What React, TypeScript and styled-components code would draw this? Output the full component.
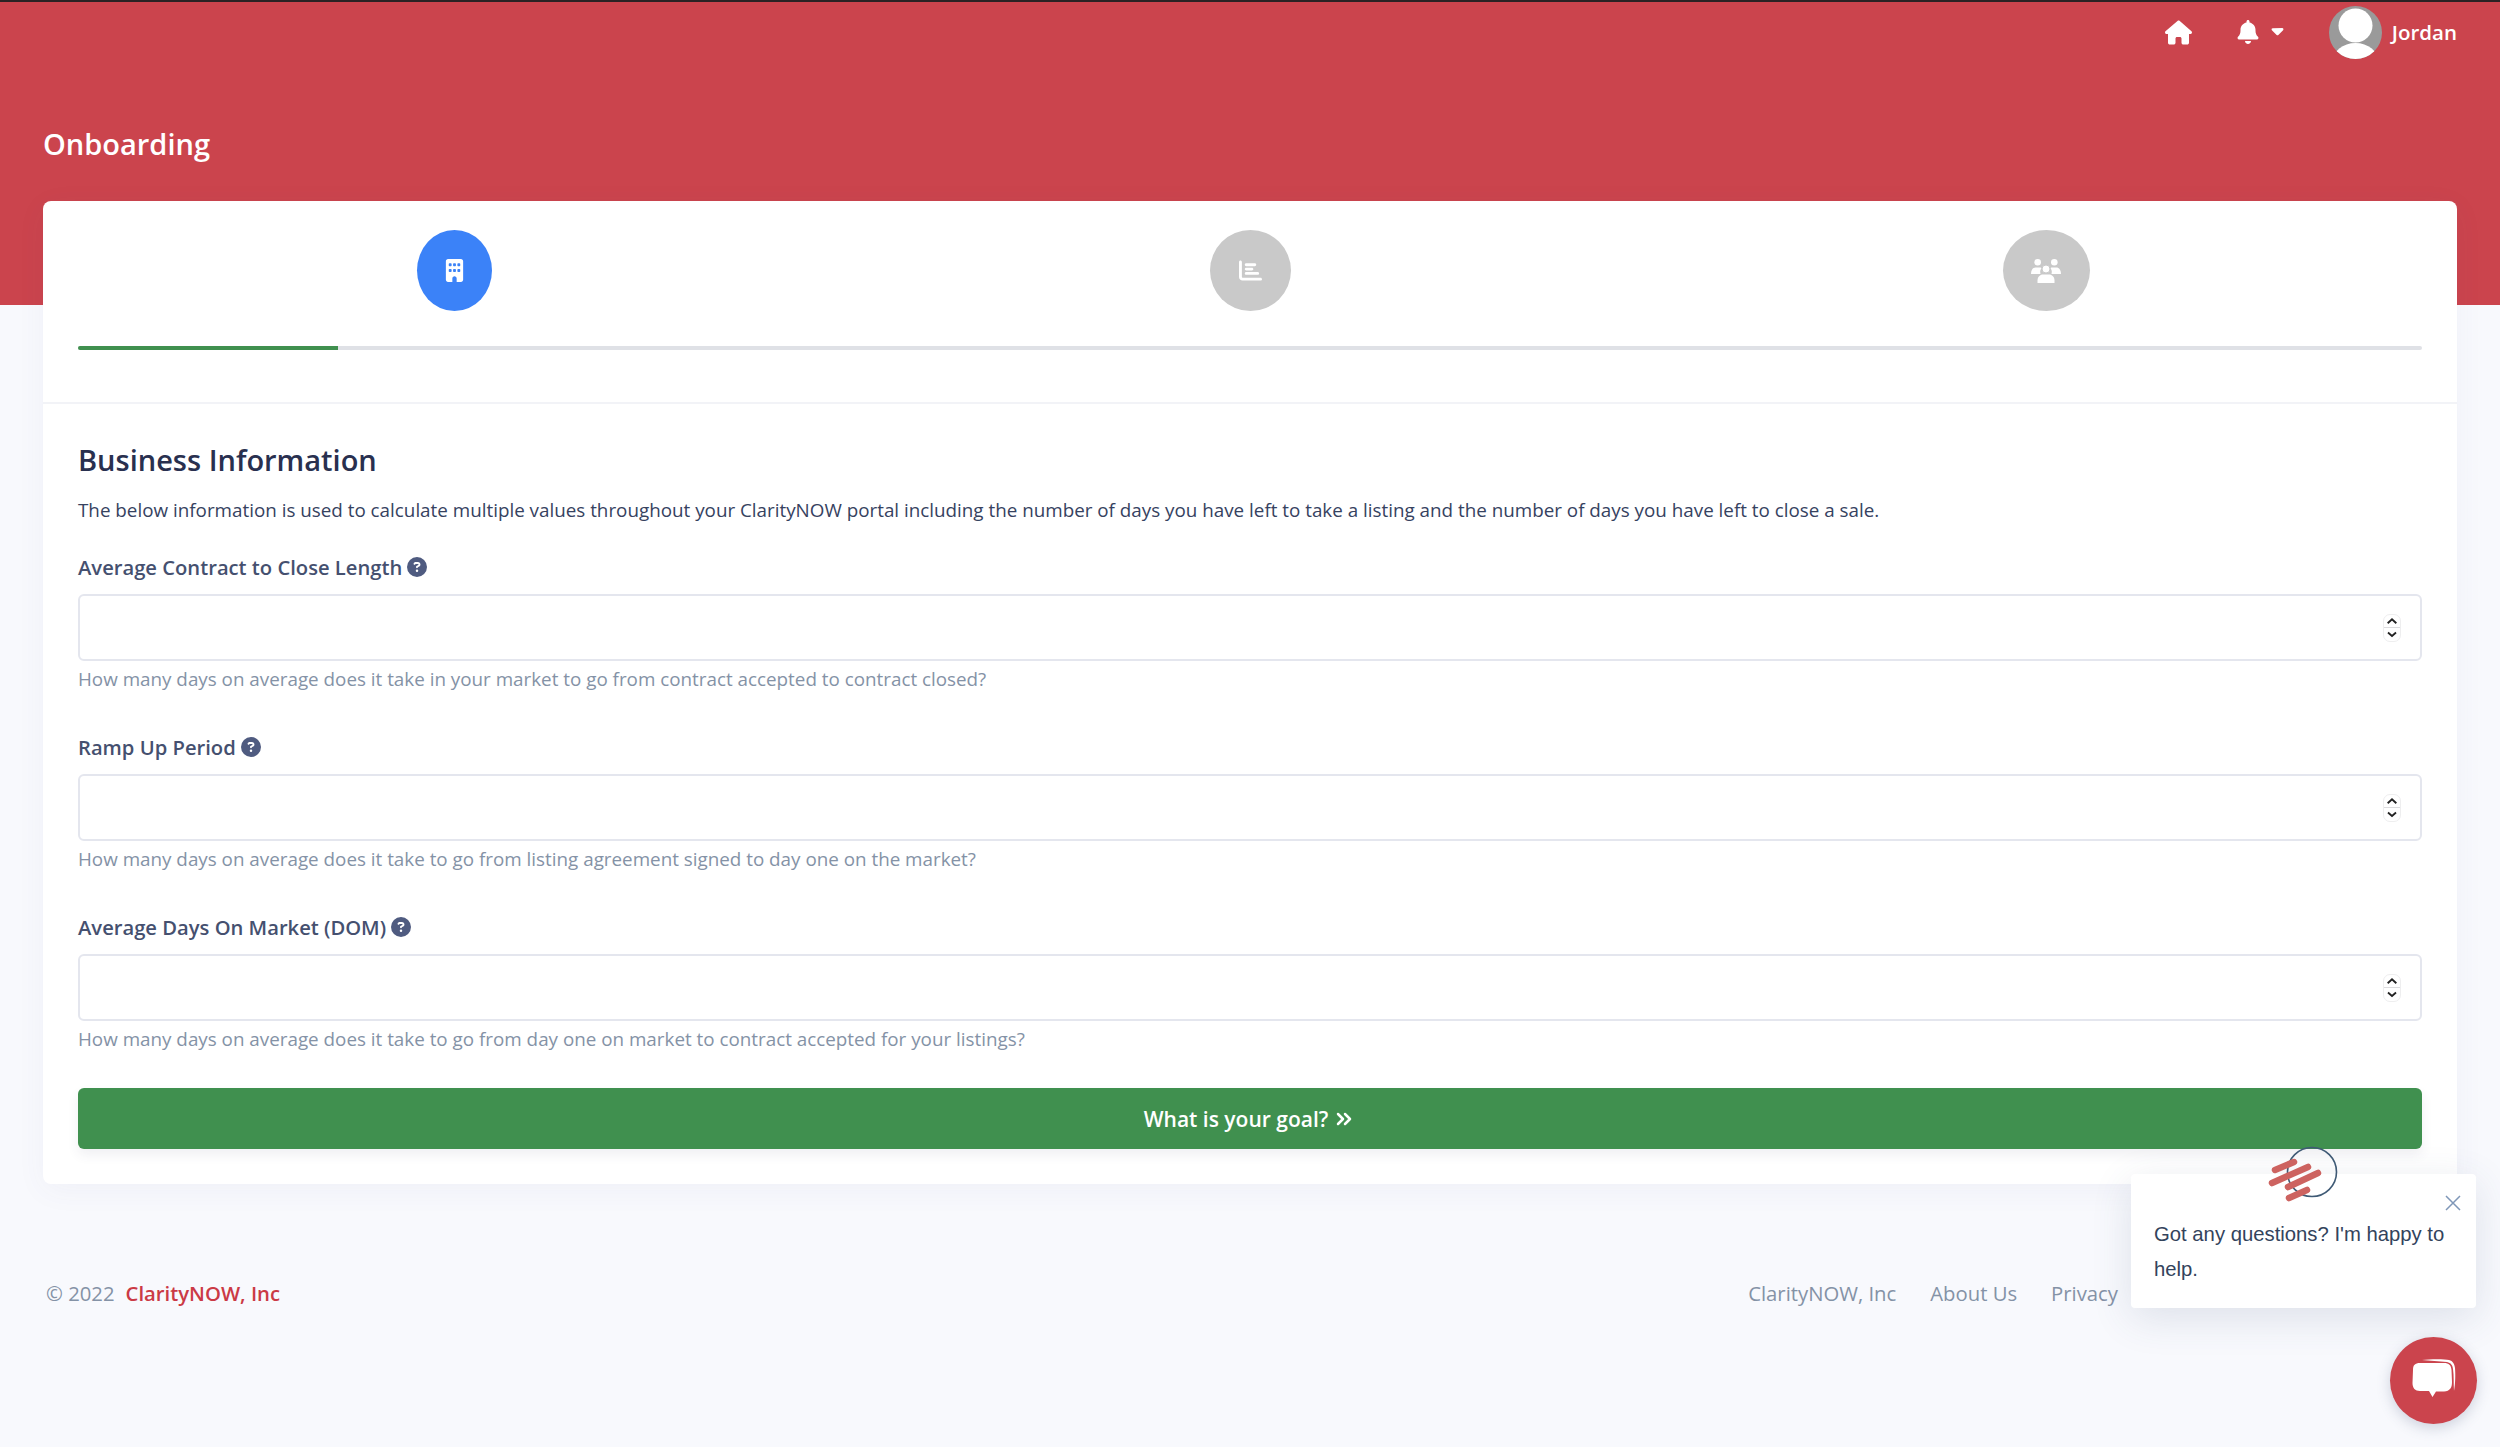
import React from "react";
import styled, { createGlobalStyle } from "styled-components";
import { FaHouse, FaBell, FaCaretDown, FaBuilding, FaChartBar, FaCircleQuestion } from "react-icons/fa6";
import { ChevronsRight } from "lucide-react";

const Global = createGlobalStyle`
  html, body { margin: 0; padding: 0; background: #f8f9fd; }
  body { font-family: "Open Sans", "Liberation Sans", sans-serif; color: #2b3a5a; }
  * { box-sizing: border-box; }
`;

const Page = styled.div`
  width: 2500px;
  height: 1447px;
  overflow: hidden;
  position: relative;
`;

const Header = styled.header`
  height: 305px;
  background: #cb444d;
  border-top: 2px solid #2a2224;
  padding: 0 43px;
`;

const TopBar = styled.div`
  display: flex;
  justify-content: flex-end;
  align-items: center;
  height: 60px;
  color: #fff;
`;

const NavIcon = styled.span<{ $size: number; $mr: number; $raise?: number }>`
  display: inline-flex;
  font-size: ${(p) => p.$size}px;
  margin-right: ${(p) => p.$mr}px;
  margin-bottom: ${(p) => p.$raise ?? 0}px;
`;

const Avatar = styled.svg`
  width: 53px;
  height: 53px;
  margin-right: 10px;
`;

const UserName = styled.span`
  font-size: 20.5px;
  font-weight: 600;
`;

const Title = styled.h1`
  margin: 62px 0 0;
  font-size: 29px;
  line-height: 40px;
  font-weight: 600;
  color: #fff;
`;

const Card = styled.main`
  margin: -104px 43px 0;
  height: 983px;
  background: #fff;
  border-radius: 8px;
  box-shadow: 0 6px 30px rgba(70, 80, 130, 0.05);
`;

const Wizard = styled.div`
  height: 203px;
  padding: 29px 35px 0;
  border-bottom: 2px solid #f2f3f7;
`;

const Steps = styled.div`
  display: grid;
  grid-template-columns: repeat(3, 1fr);
  height: 81px;
  margin: 0 -22px;
`;

const Step = styled.div`
  display: flex;
  justify-content: center;
`;

const StepCircle = styled.div<{ $w: number; $active?: boolean }>`
  width: ${(p) => p.$w}px;
  height: 81px;
  border-radius: 50%;
  background: ${(p) => (p.$active ? "#3b82f8" : "#c9c9c9")};
  display: flex;
  align-items: center;
  justify-content: center;
  color: #fff;
  font-size: 23px;
`;

const Track = styled.div`
  margin-top: 35px;
  height: 4px;
  border-radius: 2px;
  background: #dfe1e6;
  overflow: hidden;
`;

const Fill = styled.div`
  height: 100%;
  background: #40904f;
`;

const Body = styled.div`
  padding: 36px 35px 0;
`;

const SectionTitle = styled.h2`
  margin: 0;
  font-size: 29px;
  line-height: 40px;
  font-weight: 600;
  color: #29304f;
`;

const Intro = styled.p`
  margin: 17px 0 0;
  font-size: 18.82px;
  line-height: 27px;
  color: #36425f;
`;

const Field = styled.div`
  margin-top: 29px;
  & + & { margin-top: 40px; }
`;

const Label = styled.label`
  display: flex;
  align-items: center;
  gap: 5px;
  height: 27px;
  font-size: 20.2px;
  font-weight: 600;
  color: #45506f;
  svg { font-size: 20px; color: #4f5b80; }
`;

const InputBox = styled.div`
  margin-top: 14px;
  height: 67px;
  border: 2px solid #e4e6ee;
  border-radius: 6px;
  display: flex;
  align-items: center;
  justify-content: flex-end;
  padding-right: 19px;
`;

const Spinner = styled.div`
  width: 18px;
  height: 28px;
  border-radius: 7px;
  border: 1px solid #eeeeef;
  display: flex;
  flex-direction: column;
  svg { display: block; width: 16px; height: 13px; }
  svg + svg { border-top: 1px solid #dcdcde; height: 14px; }
`;

const Hint = styled.div`
  margin-top: 5px;
  font-size: 18.82px;
  line-height: 27px;
  color: #8492a6;
`;

const PrimaryButton = styled.button`
  display: flex;
  align-items: center;
  justify-content: center;
  gap: 4px;
  width: 100%;
  height: 61px;
  margin-top: 35px;
  border: 0;
  border-radius: 6px;
  background: #40904f;
  color: #fff;
  font-family: inherit;
  font-size: 21px;
  font-weight: 600;
  box-shadow: 0 6px 12px rgba(60, 70, 100, 0.08);
`;

const Footer = styled.footer`
  display: flex;
  align-items: center;
  justify-content: space-between;
  margin-top: 89px;
  padding: 0 382px 0 46px;
  height: 40px;
  font-size: 20.3px;
  color: #8492a6;
`;

const Copy = styled.span`
  display: flex;
  gap: 11px;
`;

const Brand = styled.a`
  color: #cb3a45;
  font-weight: 600;
`;

const FootNav = styled.nav`
  display: flex;
  gap: 34px;
`;

const Popup = styled.aside`
  position: absolute;
  left: 2131px;
  top: 1174px;
  width: 345px;
  height: 134px;
  padding: 43px 23px 0;
  background: #fff;
  border-radius: 4px;
  box-shadow: 0 10px 40px rgba(60, 75, 110, 0.14);
  font-family: "Liberation Sans", Arial, sans-serif;
  font-size: 20.3px;
  line-height: 35px;
  color: #33435c;
`;

const Close = styled.svg`
  position: absolute;
  right: 14px;
  top: 20px;
  width: 18px;
  height: 18px;
`;

const ChatLogo = styled.svg`
  position: absolute;
  left: 2268px;
  top: 1145px;
  width: 72px;
  height: 70px;
`;

const ChatButton = styled.div`
  position: absolute;
  left: 2390px;
  top: 1337px;
  width: 87px;
  height: 87px;
  border-radius: 50%;
  background: #cb444d;
  box-shadow: 0 4px 14px rgba(60, 75, 110, 0.22);
  display: flex;
  align-items: center;
  justify-content: center;
`;

const ChatGlyph = styled.svg`
  width: 44px;
  height: 44px;
`;

const Chevrons = () => (
  <Spinner>
    <svg viewBox="0 0 16 13"><path d="M3.5 8.5 8 4.500l4.500 4" fill="none" stroke="#222" strokeWidth="2" /></svg>
    <svg viewBox="0 0 16 14"><path d="M3.500 5 8 9l4.500-4" fill="none" stroke="#222" strokeWidth="2" /></svg>
  </Spinner>
);

const fields = [
  { label: "Average Contract to Close Length", hint: "How many days on average does it take in your market to go from contract accepted to contract closed?" },
  { label: "Ramp Up Period", hint: "How many days on average does it take to go from listing agreement signed to day one on the market?" },
  { label: "Average Days On Market (DOM)", hint: "How many days on average does it take to go from day one on market to contract accepted for your listings?" },
];

export default function App() {
  return (
    <Page>
      <Global />
      <Header>
        <TopBar>
          <NavIcon $size={27} $mr={44}><FaHouse /></NavIcon>
          <NavIcon $size={24} $mr={8}><FaBell /></NavIcon>
          <NavIcon $size={19} $mr={42} $raise={4}><FaCaretDown /></NavIcon>
          <Avatar viewBox="0 0 53 53">
            <defs><clipPath id="av"><circle cx="26.5" cy="26.5" r="26.5" /></clipPath></defs>
            <circle cx="26.5" cy="26.5" r="26.5" fill="#9a9a9a" />
            <g clipPath="url(#av)">
              <circle cx="26.5" cy="19.5" r="17" fill="#fff" />
              <ellipse cx="26.5" cy="56" rx="23" ry="19" fill="#fff" />
            </g>
          </Avatar>
          <UserName>Jordan</UserName>
        </TopBar>
        <Title>Onboarding</Title>
      </Header>
      <Card>
        <Wizard>
          <Steps>
            <Step><StepCircle $w={75} $active><FaBuilding /></StepCircle></Step>
            <Step><StepCircle $w={81}><FaChartBar /></StepCircle></Step>
            <Step>
              <StepCircle $w={87}>
                <svg width="30" height="24" viewBox="0 0 30 24" fill="#fff">
                  <circle cx="6.7" cy="3.3" r="3.3" />
                  <circle cx="23.3" cy="3.3" r="3.3" />
                  <path d="M0 15c0-4 2-6.500 4.500-6.500h4.500c1 0 1.500.5 1.500 1C9 11 9 13 9.500 15H0zM30 15c0-4-2-6.500-4.500-6.500H21c-1 0-1.500.5-1.500 1C21 11 21 13 20.500 15H30z" />
                  <circle cx="15" cy="10" r="4" stroke="#c9c9c9" strokeWidth="1" />
                  <path d="M6.500 24v-2.500c0-3.500 2.500-6 5.500-6h6c3 0 5.500 2.500 5.500 6V24H6.500z" />
                </svg>
              </StepCircle>
            </Step>
          </Steps>
          <Track><Fill style={{ width: `${(260 / 2344) * 100}%` }} /></Track>
        </Wizard>
        <Body>
          <SectionTitle>Business Information</SectionTitle>
          <Intro>The below information is used to calculate multiple values throughout your ClarityNOW portal including the number of days you have left to take a listing and the number of days you have left to close a sale.</Intro>
          {fields.map((f) => (
            <Field key={f.label}>
              <Label>{f.label} <FaCircleQuestion /></Label>
              <InputBox><Chevrons /></InputBox>
              <Hint>{f.hint}</Hint>
            </Field>
          ))}
          <PrimaryButton>What is your goal? <ChevronsRight size={24} strokeWidth={2.5} /></PrimaryButton>
        </Body>
      </Card>
      <Footer>
        <Copy>© 2022 <Brand>ClarityNOW, Inc</Brand></Copy>
        <FootNav>
          <span>ClarityNOW, Inc</span>
          <span>About Us</span>
          <span>Privacy</span>
        </FootNav>
      </Footer>
      <Popup>
        <Close viewBox="0 0 18 18"><path d="M2 2l14 14M16 2 2 16" stroke="#7f97b8" strokeWidth="1.5" fill="none" /></Close>
        Got any questions? I'm happy to help.
      </Popup>
      <ChatLogo viewBox="0 0 72 70">
        <circle cx="44" cy="27" r="24.500" fill="none" stroke="#3f5a75" strokeWidth="1.6" />
        <g stroke="#cd6360" strokeWidth="6.500" strokeLinecap="round">
          <path d="M7 25 26 17" />
          <path d="M4 38 40 22" />
          <path d="M20 42 50 28" />
          <path d="M21 53 39 45" />
        </g>
      </ChatLogo>
      <ChatButton>
        <ChatGlyph viewBox="0 0 44 44">
          <path d="M10 1c8-1 23-1 27 0 4 1 5.500 4 6 8 .5 6 .5 15-1 23-.5-8 0-15-1-22-.5-4-2-6-6-7-8-1-17-1-25-2z" fill="#fff" />
          <path d="M8 4h24c5 0 7 2 7.500 7l.5 12c0 6-2 9-8 9.500H24l-3.500 5.500-3.500-6H8c-5 0-7.500-3-7.500-8L1 11c0-5 2-7 7-7z" fill="#fff" />
        </ChatGlyph>
      </ChatButton>
    </Page>
  );
}
